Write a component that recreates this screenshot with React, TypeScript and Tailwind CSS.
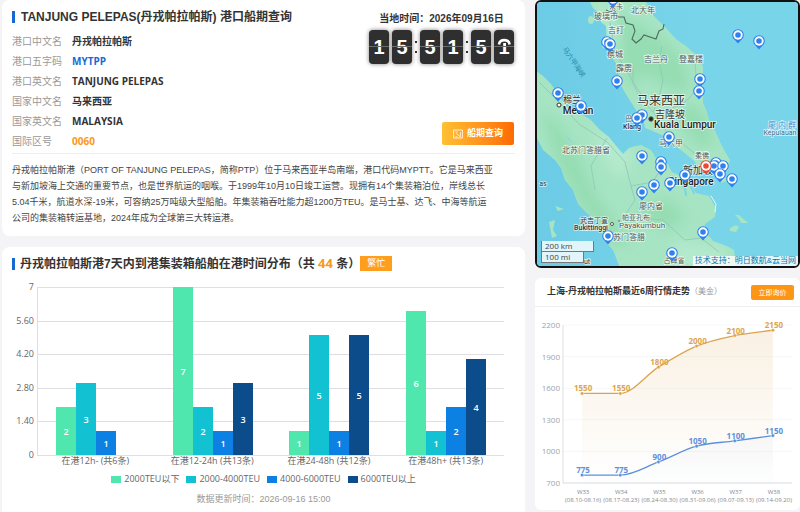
interface Pin {
  x: number;
  y: number;
  active?: boolean;
}

interface MapLabel {
  text: string;
  x: number;
  y: number;
  size: number;
  color?: string;
  weight?: number;
  rotate?: number;
}

const portInfo = [
  { label: '港口中文名', value: '丹戎帕拉帕斯', tone: 'text-[#333]' },
  { label: '港口五字码', value: 'MYTPP', tone: 'text-[#1769d2]' },
  { label: '港口英文名', value: 'TANJUNG PELEPAS', tone: 'text-[#333]' },
  { label: '国家中文名', value: '马来西亚', tone: 'text-[#333]' },
  { label: '国家英文名', value: 'MALAYSIA', tone: 'text-[#333]' },
  { label: '国际区号', value: '0060', tone: 'text-[#f8981d]' },
];

const series = [
  { name: '2000TEU以下', color: '#50e7ae', values: [2, 7, 1, 6] },
  { name: '2000-4000TEU', color: '#13c2d2', values: [3, 2, 5, 1] },
  { name: '4000-6000TEU', color: '#0c80e3', values: [1, 1, 1, 2] },
  { name: '6000TEU以上', color: '#0c4c8a', values: [0, 3, 5, 4] },
];
const categories = ['在港12h- (共6条)', '在港12-24h (共13条)', '在港24-48h (共12条)', '在港48h+ (共13条)'];
const barTicks = ['0', '1.40', '2.80', '4.20', '5.60', '7'];

const weeks = [
  { name: 'W33', range: '(08.10-08.16)', high: 1550, low: 775 },
  { name: 'W34', range: '(08.17-08.23)', high: 1550, low: 775 },
  { name: 'W35', range: '(08.24-08.30)', high: 1800, low: 900 },
  { name: 'W36', range: '(08.31-09.06)', high: 2000, low: 1050 },
  { name: 'W37', range: '(09.07-09.13)', high: 2100, low: 1100 },
  { name: 'W38', range: '(09.14-09.20)', high: 2150, low: 1150 },
];

const pins: Pin[] = [
  { x: 78, y: -1 },
  { x: 72, y: 42 },
  { x: 75, y: 44 },
  { x: 203, y: 35 },
  { x: 224, y: 41 },
  { x: 165, y: 79 },
  { x: 164, y: 91 },
  { x: 82, y: 81 },
  { x: 23, y: 93 },
  { x: 46, y: 106 },
  { x: 107, y: 115 },
  { x: 102, y: 118 },
  { x: 134, y: 137 },
  { x: 107, y: 156 },
  { x: 126, y: 162 },
  { x: 126, y: 167 },
  { x: 150, y: 175 },
  { x: 135, y: 183 },
  { x: 119, y: 185 },
  { x: 107, y: 192 },
  { x: 181, y: 163 },
  { x: 179, y: 166 },
  { x: 188, y: 166 },
  { x: 185, y: 174 },
  { x: 197, y: 179 },
  { x: 168, y: 232 },
  { x: 73, y: 236 },
  { x: 137, y: 253 },
  { x: 171, y: 166, active: true },
];

const mapLabels: MapLabel[] = [
  { text: '宋卡', x: 81, y: 6, size: 7 },
  { text: '北大年', x: 108, y: 10, size: 8 },
  { text: '玻璃市', x: 71, y: 16, size: 8 },
  { text: '吉打', x: 81, y: 30, size: 8 },
  { text: '槟城', x: 80, y: 54, size: 8 },
  { text: '吉兰丹', x: 121, y: 59, size: 8 },
  { text: '登嘉楼', x: 156, y: 59, size: 8 },
  { text: '霹雳', x: 89, y: 68, size: 8 },
  { text: '马六甲海峡', x: 39, y: 62, size: 7, color: '#2d8ea8', rotate: 56 },
  { text: '棉兰', x: 37, y: 100, size: 9, color: '#333' },
  { text: 'Medan', x: 43, y: 110, size: 10, color: '#222', weight: 500 },
  { text: '马来西亚', x: 126, y: 101, size: 12, color: '#333' },
  { text: '吉隆坡', x: 135, y: 114, size: 10, color: '#333' },
  { text: 'Kuala Lumpur', x: 150, y: 124, size: 10, color: '#222', weight: 500 },
  { text: '巴生', x: 97, y: 118, size: 7 },
  { text: 'Klang', x: 97, y: 126, size: 7, color: '#333', weight: 500 },
  { text: '廖 内 群', x: 247, y: 125, size: 8, color: '#3f8fd0' },
  { text: 'Kepulauan', x: 245, y: 132, size: 7, color: '#3d6f86' },
  { text: '马六甲', x: 136, y: 143, size: 8 },
  { text: '北苏门答腊省', x: 51, y: 150, size: 8 },
  { text: '柔佛', x: 167, y: 155, size: 7 },
  { text: '新加坡', x: 163, y: 170, size: 10, color: '#333' },
  { text: 'Singapore', x: 156, y: 181, size: 10, color: '#222', weight: 500 },
  { text: '廖内省', x: 116, y: 206, size: 8 },
  { text: '武吉丁宣', x: 59, y: 220, size: 7, color: '#333' },
  { text: 'Bukittinggi', x: 56, y: 227, size: 7, color: '#333', weight: 500 },
  { text: '帕亚孔布', x: 101, y: 217, size: 7 },
  { text: 'Payakumbuh', x: 107, y: 225, size: 8 },
  { text: '苏门答腊', x: 94, y: 237, size: 8 },
  { text: '占碑省', x: 139, y: 260, size: 7 },
  { text: 'as', x: 8, y: 183, size: 7, color: '#333' },
  { text: 'ut', x: 52, y: 261, size: 7, color: '#333' },
];

function FlipDigit({ value, flipping }: { value: string; flipping?: boolean }) {
  return (
    <span className="relative block h-[34px] w-5 rounded-sm bg-[#2f2f2f] text-center text-xl leading-[34px] font-bold text-white shadow-[0_0_4px_rgba(0,0,0,0.5)]">
      {value}
      {flipping && (
        <svg viewBox="0 0 20 16" className="absolute inset-x-0 top-0 h-4 w-5">
          <rect x="2" y="4" width="16" height="12" fill="#2f2f2f" />
          <path d="M5 14.5 C5.6 8.6 15 8.6 15.6 14.5" fill="none" stroke="#fff" strokeWidth="2.6" />
          <path d="M9.2 13 H12 V16 H9.2Z" fill="#fff" />
        </svg>
      )}
      <span className="absolute inset-x-0 top-4 h-px bg-[#6b6b6b]" />
    </span>
  );
}

function Colon() {
  return (
    <span className="flex w-2 flex-col items-center gap-2">
      <span className="size-[2px] bg-[#333]" />
      <span className="size-[2px] bg-[#333]" />
    </span>
  );
}

function Clock() {
  return (
    <div className="flex flex-col items-center">
      <p className="text-[10px] leading-4 font-bold text-[#333]">当地时间：2026年09月16日</p>
      <div className="mt-[3px] flex items-center">
        <div className="flex gap-[3px]">
          <FlipDigit value="1" />
          <FlipDigit value="5" />
        </div>
        <Colon />
        <div className="flex gap-[3px]">
          <FlipDigit value="5" />
          <FlipDigit value="1" />
        </div>
        <Colon />
        <div className="flex gap-[3px]">
          <FlipDigit value="5" />
          <FlipDigit value="1" flipping />
        </div>
      </div>
    </div>
  );
}

function PortCard() {
  return (
    <section className="rounded-lg bg-white">
      <div className="mx-2.5 flex justify-between border-b border-[#eee] pt-2 pb-[2px]">
        <div>
          <h1 className="flex items-center gap-1.5 text-xs leading-[18px] font-bold text-[#333]">
            <span className="h-3 w-[3px] bg-[#1769d2]" />
            TANJUNG PELEPAS(丹戎帕拉帕斯) 港口船期查询
          </h1>
          <dl className="mt-[5px] font-['Open_Sans','Noto_Sans_CJK_SC',sans-serif] text-[10px] leading-5">
            {portInfo.map((item) => (
              <div key={item.label} className="flex">
                <dt className="w-[60px] text-[#999]">{item.label}</dt>
                <dd className={`font-bold ${item.tone}`}>{item.value}</dd>
              </div>
            ))}
          </dl>
        </div>
        <div className="flex flex-col items-end justify-between pt-[3px] pr-px pb-1.5">
          <Clock />
          <button
            type="button"
            className="flex h-[23px] w-[72px] items-center justify-center gap-1 rounded-xs bg-linear-to-r from-[#ffc033] to-[#ff6a00] text-[9px] font-bold text-white"
          >
            <svg viewBox="0 0 10 10" className="size-2.5" fill="none" stroke="currentColor" strokeWidth="0.8">
              <path d="M0.6 1h8.8v8H0.6zM2.4 3l2.2 0M3 4.2l4 3.4M7.4 3.2v4.6M2.5 7.8h1.8" />
            </svg>
            船期查询
          </button>
        </div>
      </div>
      <p className="px-2.5 pt-2 pb-[10px] text-[9px] leading-4 whitespace-nowrap text-[#444]">
        丹戎帕拉帕斯港（PORT OF TANJUNG PELEPAS，简称PTP）位于马来西亚半岛南端，港口代码MYPTT。它是马来西亚
        <br />
        与新加坡海上交通的重要节点，也是世界航运的咽喉。于1999年10月10日竣工运营。现拥有14个集装箱泊位，岸线总长
        <br />
        5.04千米，航道水深-19米，可容纳25万吨级大型船舶。年集装箱吞吐能力超1200万TEU。是马士基、达飞、中海等航运
        <br />
        公司的集装箱转运基地，2024年成为全球第三大转运港。
      </p>
    </section>
  );
}

function BarChart() {
  const left = 35;
  const right = 502;
  const top = 7;
  const bottom = 175;
  const band = (right - left) / 4;

  return (
    <svg viewBox="0 0 523 190" className="block w-full font-['Open_Sans','Noto_Sans_CJK_SC',sans-serif] text-[9px]">
      {barTicks.map((tick, i) => {
        const y = Math.round(bottom - ((bottom - top) / 5) * i);
        return (
          <g key={tick}>
            <line x1={left} x2={right} y1={y + 0.5} y2={y + 0.5} stroke="#dfdfe3" />
            <text x={left - 3} y={y + 3} textAnchor="end" fill="#666">
              {tick}
            </text>
          </g>
        );
      })}
      <line x1={left + 0.5} x2={left + 0.5} y1={top} y2={bottom} stroke="#dfdfe3" />
      {categories.map((name, c) => (
        <g key={name}>
          {series.map((s, i) => {
            const value = s.values[c];
            if (!value) return null;
            const height = value * 24;
            const x = Math.round(left + band * c + band / 2 - 39.5 + i * 20);
            return (
              <g key={s.name}>
                <rect x={x} y={bottom - height} width="20" height={height} fill={s.color} />
                <text x={x + 10} y={bottom - height / 2 + 4} textAnchor="middle" fill="#fff" fontWeight="600">
                  {value}
                </text>
              </g>
            );
          })}
          <text x={left + band * (c + 0.5)} y={bottom + 9} textAnchor="middle" fill="#666">
            {name}
          </text>
        </g>
      ))}
    </svg>
  );
}

function StayCard() {
  return (
    <section className="flex-1 rounded-t-lg bg-white pb-1.5">
      <h2 className="flex h-[33px] items-center px-2.5 text-xs font-bold text-[#333]">
        <span className="mr-[5px] h-3 w-[3px] bg-[#1769d2]" />
        <span>
          丹戎帕拉帕斯港7天内到港集装箱船舶在港时间分布（共{' '}
          <span className="font-['Open_Sans',sans-serif] text-[13px] leading-none text-[#f8981d]">44</span> 条）
        </span>
        <span className="bg-[#ff9d1c] px-[7px] text-[9px] leading-[15px] font-normal text-white">繁忙</span>
      </h2>
      <BarChart />
      <ul className="mt-[3px] flex justify-center gap-[7px] font-['Open_Sans','Noto_Sans_CJK_SC',sans-serif] text-[9px] leading-3 text-[#666]">
        {series.map((s) => (
          <li key={s.name} className="flex items-center gap-[3px]">
            <svg viewBox="0 0 10 7" className="h-[7px] w-2.5">
              <rect width="10" height="7" fill={s.color} />
            </svg>
            {s.name}
          </li>
        ))}
      </ul>
      <p className="mt-2 text-center text-[9px] leading-3 text-[#999]">数据更新时间：2026-09-16 15:00</p>
    </section>
  );
}

function MapPin({ x, y, active }: Pin) {
  const color = active ? '#ea4a35' : '#2f82ee';
  return (
    <g transform={`translate(${x} ${y})`}>
      <path d="M0 8.6 L-3.6 4.6 A5.8 5.8 0 1 1 3.6 4.6 Z" fill={color} />
      <circle r="4.7" fill="#fff" />
      <circle r="2.8" fill={color} />
    </g>
  );
}

function PortMap() {
  return (
    <section className="relative overflow-hidden rounded-md border-2 border-[#111]">
      <svg viewBox="2 2 261 264" className="block w-full font-[Roboto,'Noto_Sans_CJK_SC',sans-serif]">
        <defs>
          <clipPath id="land">
            <path d="M54 0 L58 8 63 12 66 22 71 26 72 43 75 55 83 66 84 82 92 96 101 110 108 118 110 128 120 132 129 136 142 147 158 160 165 168 170 173 176 169 182 172 193 171 195 160 188 148 180 131 175 124 172 112 168 103 168 87 168 67 163 57 151 46 142 40 128 25 118 15 110 0Z" />
            <path d="M0 70 L8 76 16 84 23 94 32 107 45 113 56 120 64 129 74 137 82 147 88 154 94 148 104 146 113 150 120 157 132 163 137 172 146 176 157 186 161 193 174 196 181 208 180 217 170 224 169 230 178 241 192 246 199 250 201 268 85 268 78 250 68 239 66 228 59 219 52 213 43 204 38 190 30 180 26 168 20 160 8 150 0 134Z" />
          </clipPath>
          <linearGradient id="sea" x1="0" y1="0" x2="1" y2="0">
            <stop offset="0" stopColor="#6ccbe5" />
            <stop offset="0.6" stopColor="#78d4e9" />
          </linearGradient>
          <filter id="soft">
            <feGaussianBlur stdDeviation="6" />
          </filter>
        </defs>
        <rect width="266" height="270" fill="url(#sea)" />
        <g clipPath="url(#land)">
          <rect width="266" height="270" fill="#a6e4c3" />
          <g filter="url(#soft)" fill="#96ddb3">
            <path d="M82 14 L110 28 132 42 150 62 155 90 140 92 110 74 96 88 86 60Z" />
            <path d="M148 104 L166 108 180 144 162 146 146 124Z" />
            <path d="M4 108 L24 124 46 158 58 190 74 212 96 246 78 244 44 204 22 162Z" />
            <path d="M100 206 L134 198 152 218 132 230 108 218Z" />
          </g>
          <g filter="url(#soft)" fill="#b4e9cd">
            <path d="M66 0 L78 20 84 40 74 46 60 10Z" />
            <path d="M56 126 L100 150 90 180 74 170Z" />
            <path d="M138 240 L190 248 190 268 140 268Z" />
          </g>
          <g fill="none" stroke="#8fc7b4" strokeWidth="0.8">
            <path d="M75 22 L80 52 94 74 104 96 118 112 132 132 158 152 170 166" />
            <path d="M127 46 L124 62 128 80 124 98 118 112" />
            <path d="M160 62 L162 90 150 102 120 116" />
            <path d="M98 66 L98 82 106 94" />
            <path d="M4 82 L20 98 44 124 72 142 90 162 96 186 100 200 88 218 100 240" />
            <path d="M96 186 L118 182 126 168" />
            <path d="M104 218 L128 220 150 240 166 238 184 252" />
            <path d="M72 138 L56 166 60 190" />
          </g>
        </g>
        <g fill="#a6e4c3">
          <ellipse cx="56" cy="20" rx="3" ry="4" />
          <ellipse cx="69" cy="46" rx="2" ry="2.4" />
          <path d="M96 147 L106 145 116 150 120 156 112 155Z" />
          <path d="M183 177 L190 176 192 181 186 183Z" />
          <path d="M193 174 L201 178 199 185 192 183Z" />
          <path d="M140 176 L148 182 143 185Z" />
          <path d="M159 192 L164 197 160 201Z" />
          <path d="M200 215 L204 215 213 223 206 223 204 219Z" />
          <path d="M195 228 L201 225 204 227 201 232 195 231Z" />
          <path d="M20 206 L29 209 23 211Z" />
          <path d="M14 222 L20 220 18 230 22 236 17 238Z" />
          <path d="M31 247 L35 251 32 253Z" />
        </g>
        <path d="M30 134 L34 140 41 145 36 141Z" fill="#78d4e9" />
        <g fill="none" stroke="#78d4e9" strokeLinecap="round">
          <path d="M146 183 L150 189 151 195 M156 187 L159 193" strokeWidth="2" />
          <path d="M176 196 L181 204 180 212" stroke="#e2f7fa" strokeWidth="1" />
        </g>
        <path
          d="M71 10 L75 12 79 10 83 17 89 17 91 23 98 25 100 31 97 39 101 43 106 39 109 35 115 37 121 39 124 31 128 29 129 24"
          fill="none"
          stroke="#4d6b5f"
          strokeWidth="1.1"
        />
        <circle cx="24" cy="105" r="2" fill="#fff" stroke="#333" />
        <circle cx="116" cy="119" r="2.2" fill="#222" stroke="#555" />
        <circle cx="77" cy="224" r="1.5" fill="#fff" stroke="#555" />
        <circle cx="84" cy="221" r="1.2" fill="#999" />
        {mapLabels.map((label) => (
          <text
            key={label.text}
            x={label.x}
            y={label.y}
            dy={label.size * 0.36}
            textAnchor="middle"
            fontSize={label.size}
            fontWeight={label.weight ?? 400}
            fill={label.color ?? '#4f5a57'}
            stroke={label.rotate ? 'none' : 'rgba(255,255,255,0.7)'}
            strokeWidth="1.6"
            paintOrder="stroke"
            transform={label.rotate ? `rotate(${label.rotate} ${label.x} ${label.y})` : undefined}
          >
            {label.text}
          </text>
        ))}
        {pins.map((pin) => (
          <MapPin key={`${pin.x}-${pin.y}`} {...pin} />
        ))}
      </svg>
      <div className="absolute bottom-[3px] left-1 flex flex-col items-start font-['Open_Sans',sans-serif] text-[8px] leading-[10px] text-[#444]">
        <span className="w-[53px] border border-t-0 border-[#777] bg-white/80 pl-[3px]">200 km</span>
        <span className="w-[43px] border border-t-0 border-[#777] bg-white/80 pl-[3px]">100 mi</span>
      </div>
      <div className="absolute right-0 bottom-0 bg-white/80 px-[2px] text-[8px] leading-[10px] text-[#777]">
        <a href="#support" className="text-[#0078a8]">
          技术支持：明日数航&amp;云当网
        </a>
      </div>
    </section>
  );
}

const plot = { left: 28, right: 257, top: 18, bottom: 176 };
const weekStep = (plot.right - plot.left) / weeks.length;
const weekX = (i: number) => plot.left + weekStep * (i + 0.5);
const priceY = (v: number) => plot.bottom - ((v - 700) / 1500) * (plot.bottom - plot.top);

function smoothPath(values: number[]) {
  const slope = (i: number) => {
    if (i === 0 || i === values.length - 1) return null;
    const a = priceY(values[i]) - priceY(values[i - 1]);
    const b = priceY(values[i + 1]) - priceY(values[i]);
    return a * b <= 0 ? 0 : (a + b) / 2;
  };
  return values.reduce((d, v, i) => {
    const x = weekX(i);
    const y = priceY(v);
    if (i === 0) return `M${x} ${y}`;
    const px = weekX(i - 1);
    const py = priceY(values[i - 1]);
    const from = slope(i - 1) ?? y - py;
    const to = slope(i) ?? y - py;
    return `${d} C${px + weekStep / 3} ${py + from / 3} ${x - weekStep / 3} ${y - to / 3} ${x} ${y}`;
  }, '');
}

function PriceLine({ values, color, fill }: { values: number[]; color: string; fill: string }) {
  const path = smoothPath(values);
  return (
    <g>
      <path d={`${path} V${plot.bottom} H${weekX(0)} Z`} fill={fill} />
      <path d={path} fill="none" stroke={color} strokeWidth="1.3" />
      {values.map((v, i) => (
        <g key={i}>
          <circle cx={weekX(i)} cy={priceY(v)} r="1.8" fill={color} stroke="#fff" strokeWidth="0.5" />
          <text x={weekX(i) + 1} y={priceY(v) - 2} textAnchor="middle" fontWeight="700" fill={color}>
            {v}
          </text>
        </g>
      ))}
    </g>
  );
}

function TrendChart() {
  return (
    <svg viewBox="0 0 265 203" className="block w-full font-['Open_Sans',sans-serif] text-[8px]">
      <defs>
        <linearGradient id="gold" x1="0" y1="0" x2="0" y2="1">
          <stop offset="0" stopColor="#dba550" stopOpacity="0.16" />
          <stop offset="1" stopColor="#dba550" stopOpacity="0" />
        </linearGradient>
        <linearGradient id="blue" x1="0" y1="0" x2="0" y2="1">
          <stop offset="0" stopColor="#5d90dc" stopOpacity="0.04" />
          <stop offset="1" stopColor="#5d90dc" stopOpacity="0.01" />
        </linearGradient>
      </defs>
      {[2200, 1900, 1600, 1300, 1000, 700].map((tick) => (
        <g key={tick}>
          <line x1={plot.left} x2={plot.right} y1={priceY(tick)} y2={priceY(tick)} stroke="#f7f7f8" />
          <text x={plot.left - 3} y={priceY(tick) + 3} textAnchor="end" fill="#a0a4aa">
            {tick}
          </text>
        </g>
      ))}
      <path d={`M${plot.left} ${plot.top} V${plot.bottom} H${plot.right}`} fill="none" stroke="#dedfe2" />
      <PriceLine values={weeks.map((w) => w.high)} color="#dba550" fill="url(#gold)" />
      <PriceLine values={weeks.map((w) => w.low)} color="#5d90dc" fill="url(#blue)" />
      {weeks.map((w, i) => (
        <g key={w.name} textAnchor="middle" fill="#85898f" fontSize="6">
          <text x={weekX(i) + 1} y={plot.bottom + 11}>
            {w.name}
          </text>
          <text x={weekX(i) + 1} y={plot.bottom + 19}>
            {w.range}
          </text>
        </g>
      ))}
    </svg>
  );
}

function TrendCard() {
  return (
    <section className="rounded-md bg-white">
      <header className="flex h-[29px] items-center border-b border-[#eee] pr-1.5 pl-3">
        <h2 className="text-[9px] font-bold text-[#333]">上海-丹戎帕拉帕斯最近6周行情走势</h2>
        <span className="text-[8px] text-[#999]">（美金）</span>
        <button
          type="button"
          className="ml-auto h-[15px] w-[43px] rounded-xs bg-[#ff9514] text-[7px] leading-[15px] text-white"
        >
          立即询价
        </button>
      </header>
      <TrendChart />
    </section>
  );
}

export default function App() {
  return (
    <div className="grid min-h-screen grid-cols-[523fr_265fr] gap-2.5 bg-[#f4f4f6] pl-0.5 font-['Liberation_Sans','Noto_Sans_CJK_SC',sans-serif]">
      <main className="flex min-w-0 flex-col gap-[11px]">
        <PortCard />
        <StayCard />
      </main>
      <aside className="flex min-w-0 flex-col gap-2.5">
        <PortMap />
        <TrendCard />
      </aside>
    </div>
  );
}
